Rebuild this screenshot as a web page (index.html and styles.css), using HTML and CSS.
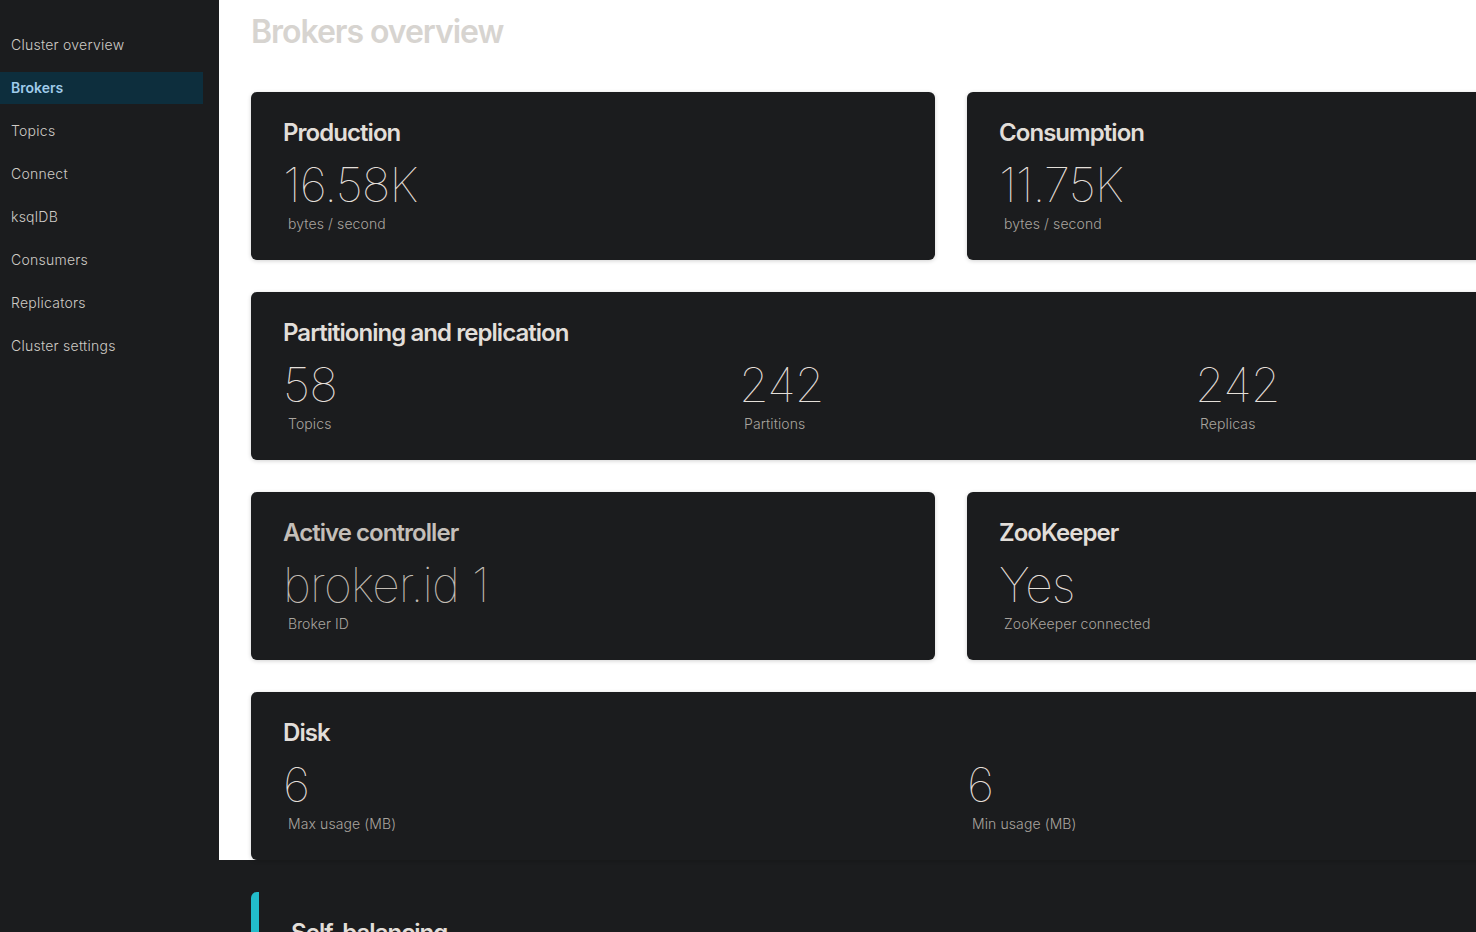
FILE: index.html
```html
<!DOCTYPE html>
<html lang="en">
<head>
<meta charset="utf-8">
<title>Brokers overview</title>
<link rel="stylesheet" href="styles.css">
</head>
<body>
<div class="app">
  <nav class="sidebar">
    <ul class="nav">
      <li class="nav-item">Cluster overview</li>
      <li class="nav-item active">Brokers</li>
      <li class="nav-item">Topics</li>
      <li class="nav-item">Connect</li>
      <li class="nav-item">ksqlDB</li>
      <li class="nav-item">Consumers</li>
      <li class="nav-item">Replicators</li>
      <li class="nav-item">Cluster settings</li>
    </ul>
  </nav>
  <div class="main-wrap">
    <main class="main">
      <h1 class="page-title">Brokers overview</h1>
      <div class="grid">
        <section class="card">
          <h2 class="card-title">Production</h2>
          <div class="stat">
            <div class="stat-value">16.58K</div>
            <div class="stat-label">bytes / second</div>
          </div>
        </section>
        <section class="card">
          <h2 class="card-title">Consumption</h2>
          <div class="stat">
            <div class="stat-value">11.75K</div>
            <div class="stat-label">bytes / second</div>
          </div>
        </section>
        <section class="card card-wide">
          <h2 class="card-title">Partitioning and replication</h2>
          <div class="stats stats-3">
            <div class="stat">
              <div class="stat-value">58</div>
              <div class="stat-label">Topics</div>
            </div>
            <div class="stat">
              <div class="stat-value">242</div>
              <div class="stat-label">Partitions</div>
            </div>
            <div class="stat">
              <div class="stat-value">242</div>
              <div class="stat-label">Replicas</div>
            </div>
          </div>
        </section>
        <section class="card card-muted">
          <h2 class="card-title">Active controller</h2>
          <div class="stat">
            <div class="stat-value">broker.id 1</div>
            <div class="stat-label">Broker ID</div>
          </div>
        </section>
        <section class="card">
          <h2 class="card-title">ZooKeeper</h2>
          <div class="stat">
            <div class="stat-value">Yes</div>
            <div class="stat-label">ZooKeeper connected</div>
          </div>
        </section>
        <section class="card card-wide">
          <h2 class="card-title">Disk</h2>
          <div class="stats stats-2">
            <div class="stat">
              <div class="stat-value">6</div>
              <div class="stat-label">Max usage (MB)</div>
            </div>
            <div class="stat">
              <div class="stat-value">6</div>
              <div class="stat-label">Min usage (MB)</div>
            </div>
          </div>
        </section>
        <section class="card card-wide card-accent">
          <h2 class="card-title">Self-balancing</h2>
        </section>
      </div>
    </main>
  </div>
</div>
</body>
</html>
```

FILE: styles.css
```css
body {
  margin: 0;
  background: #1b1c1e;
  font-family: Inter, "Noto Sans", "Liberation Sans", sans-serif;
  color: #dedad5;
}

.app {
  display: flex;
  align-items: flex-start;
  height: 100vh;
  overflow: hidden;
  background: #1b1c1e;
}

.sidebar {
  flex: none;
  width: 219px;
}

.nav {
  list-style: none;
  margin: 0;
  padding: 29px 16px 0 0;
  display: flex;
  flex-direction: column;
  gap: 11px;
}

.nav-item {
  height: 32px;
  line-height: 32px;
  padding-left: 11px;
  font-size: 14px;
  font-weight: 300;
  letter-spacing: 0.25px;
  color: #cfcbc6;
}

.nav-item.active {
  background: #0d2e3d;
  color: #9fcbea;
  font-weight: 600;
  letter-spacing: 0;
}

.main-wrap {
  flex: none;
}

.main {
  box-sizing: border-box;
  width: 1464px;
  height: 860px;
  background: #ffffff;
  padding: 0 32px;
}

.page-title {
  margin: 0;
  padding-top: 13px;
  height: 92px;
  box-sizing: border-box;
  font-size: 32px;
  line-height: 38px;
  font-weight: 600;
  letter-spacing: -1.05px;
  color: #d7d4d0;
}

.grid {
  display: grid;
  grid-template-columns: 684px 684px;
  gap: 32px;
}

.card {
  background: #1b1c1e;
  border-radius: 6px;
  box-shadow: 0 1px 4px rgba(0, 0, 0, 0.18);
  padding: 25px 32px 24px;
  min-height: 168px;
  box-sizing: border-box;
}

.card-wide {
  grid-column: 1 / -1;
}

.card-accent {
  border-left: 8px solid #22bcca;
  padding-left: 32px;
  box-shadow: none;
}

.card-title {
  margin: 0 0 8px;
  font-size: 24px;
  line-height: 32px;
  font-weight: 600;
  letter-spacing: -0.95px;
  color: #e2ded9;
}

.card-muted .card-title {
  color: #c4bfb9;
}

.card-muted .stat-value {
  color: #c2bcb4;
}

.stats {
  display: grid;
  gap: 32px;
}

.stats-3 {
  grid-template-columns: repeat(3, 1fr);
}

.stats-2 {
  grid-template-columns: repeat(2, 1fr);
}

.stat-value {
  font-size: 48px;
  line-height: 56px;
  font-weight: 100;
  letter-spacing: -0.9px;
  color: #e3dfd9;
}

.stat-label {
  margin-top: 1px;
  padding-left: 5px;
  font-size: 14px;
  line-height: 20px;
  font-weight: 300;
  letter-spacing: 0.1px;
  color: #a9a49e;
}
```
